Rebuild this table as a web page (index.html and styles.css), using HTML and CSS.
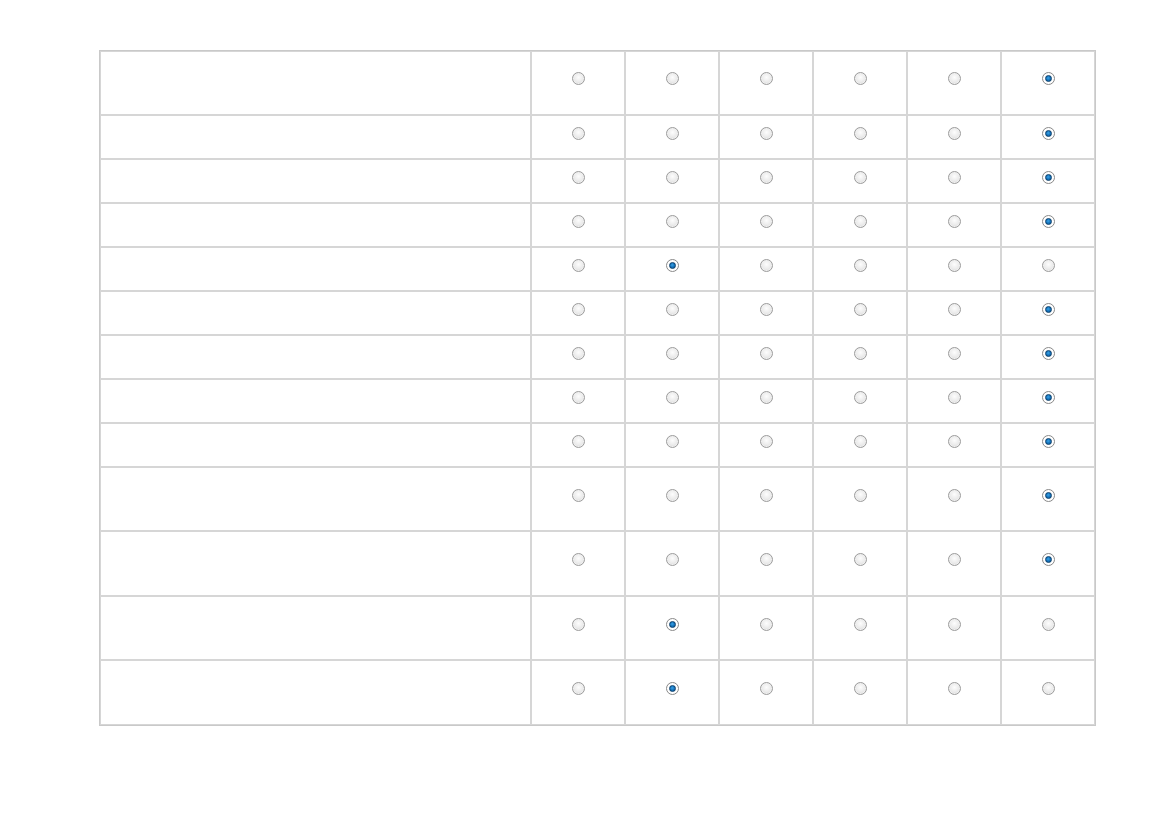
FILE: index.html
```html
<!DOCTYPE html>
<html lang="en">
<head>
<meta charset="utf-8">
<title>Survey matrix</title>
<link rel="stylesheet" href="styles.css">
</head>
<body>
<div class="wrap">
<table class="matrix">
<tbody>
<tr class="tall"><td class="q"><div class="cell"></div></td><td><div class="cell"><span class="radio"></span></div></td><td><div class="cell"><span class="radio"></span></div></td><td><div class="cell"><span class="radio"></span></div></td><td><div class="cell"><span class="radio"></span></div></td><td><div class="cell"><span class="radio"></span></div></td><td><div class="cell"><span class="radio on"></span></div></td></tr>
<tr><td class="q"><div class="cell"></div></td><td><div class="cell"><span class="radio"></span></div></td><td><div class="cell"><span class="radio"></span></div></td><td><div class="cell"><span class="radio"></span></div></td><td><div class="cell"><span class="radio"></span></div></td><td><div class="cell"><span class="radio"></span></div></td><td><div class="cell"><span class="radio on"></span></div></td></tr>
<tr><td class="q"><div class="cell"></div></td><td><div class="cell"><span class="radio"></span></div></td><td><div class="cell"><span class="radio"></span></div></td><td><div class="cell"><span class="radio"></span></div></td><td><div class="cell"><span class="radio"></span></div></td><td><div class="cell"><span class="radio"></span></div></td><td><div class="cell"><span class="radio on"></span></div></td></tr>
<tr><td class="q"><div class="cell"></div></td><td><div class="cell"><span class="radio"></span></div></td><td><div class="cell"><span class="radio"></span></div></td><td><div class="cell"><span class="radio"></span></div></td><td><div class="cell"><span class="radio"></span></div></td><td><div class="cell"><span class="radio"></span></div></td><td><div class="cell"><span class="radio on"></span></div></td></tr>
<tr><td class="q"><div class="cell"></div></td><td><div class="cell"><span class="radio"></span></div></td><td><div class="cell"><span class="radio on"></span></div></td><td><div class="cell"><span class="radio"></span></div></td><td><div class="cell"><span class="radio"></span></div></td><td><div class="cell"><span class="radio"></span></div></td><td><div class="cell"><span class="radio"></span></div></td></tr>
<tr><td class="q"><div class="cell"></div></td><td><div class="cell"><span class="radio"></span></div></td><td><div class="cell"><span class="radio"></span></div></td><td><div class="cell"><span class="radio"></span></div></td><td><div class="cell"><span class="radio"></span></div></td><td><div class="cell"><span class="radio"></span></div></td><td><div class="cell"><span class="radio on"></span></div></td></tr>
<tr><td class="q"><div class="cell"></div></td><td><div class="cell"><span class="radio"></span></div></td><td><div class="cell"><span class="radio"></span></div></td><td><div class="cell"><span class="radio"></span></div></td><td><div class="cell"><span class="radio"></span></div></td><td><div class="cell"><span class="radio"></span></div></td><td><div class="cell"><span class="radio on"></span></div></td></tr>
<tr><td class="q"><div class="cell"></div></td><td><div class="cell"><span class="radio"></span></div></td><td><div class="cell"><span class="radio"></span></div></td><td><div class="cell"><span class="radio"></span></div></td><td><div class="cell"><span class="radio"></span></div></td><td><div class="cell"><span class="radio"></span></div></td><td><div class="cell"><span class="radio on"></span></div></td></tr>
<tr><td class="q"><div class="cell"></div></td><td><div class="cell"><span class="radio"></span></div></td><td><div class="cell"><span class="radio"></span></div></td><td><div class="cell"><span class="radio"></span></div></td><td><div class="cell"><span class="radio"></span></div></td><td><div class="cell"><span class="radio"></span></div></td><td><div class="cell"><span class="radio on"></span></div></td></tr>
<tr class="tall"><td class="q"><div class="cell"></div></td><td><div class="cell"><span class="radio"></span></div></td><td><div class="cell"><span class="radio"></span></div></td><td><div class="cell"><span class="radio"></span></div></td><td><div class="cell"><span class="radio"></span></div></td><td><div class="cell"><span class="radio"></span></div></td><td><div class="cell"><span class="radio on"></span></div></td></tr>
<tr class="tall taller"><td class="q"><div class="cell"></div></td><td><div class="cell"><span class="radio"></span></div></td><td><div class="cell"><span class="radio"></span></div></td><td><div class="cell"><span class="radio"></span></div></td><td><div class="cell"><span class="radio"></span></div></td><td><div class="cell"><span class="radio"></span></div></td><td><div class="cell"><span class="radio on"></span></div></td></tr>
<tr class="tall"><td class="q"><div class="cell"></div></td><td><div class="cell"><span class="radio"></span></div></td><td><div class="cell"><span class="radio on"></span></div></td><td><div class="cell"><span class="radio"></span></div></td><td><div class="cell"><span class="radio"></span></div></td><td><div class="cell"><span class="radio"></span></div></td><td><div class="cell"><span class="radio"></span></div></td></tr>
<tr class="tall taller"><td class="q"><div class="cell"></div></td><td><div class="cell"><span class="radio"></span></div></td><td><div class="cell"><span class="radio on"></span></div></td><td><div class="cell"><span class="radio"></span></div></td><td><div class="cell"><span class="radio"></span></div></td><td><div class="cell"><span class="radio"></span></div></td><td><div class="cell"><span class="radio"></span></div></td></tr>
</tbody>
</table>
</div>
</body>
</html>
```

FILE: styles.css
```css
html, body {
  margin: 0;
  padding: 0;
  background: #ffffff;
  font-family: "Liberation Sans", Arial, sans-serif;
}

.wrap {
  padding: 50px 0 0 99px;
}

.matrix {
  border-collapse: separate;
  border-spacing: 0;
  border: 1px solid #c9c9c9;
  table-layout: fixed;
  width: 997px;
}

.matrix td {
  border: 1px solid #d6d6d6;
  padding: 0;
  width: 92px;
  vertical-align: middle;
}

.matrix td.q {
  width: 429px;
}

.cell {
  height: 42px;
  display: flex;
  align-items: center;
  justify-content: center;
  box-sizing: border-box;
  padding-bottom: 8px;
}

.tall .cell {
  height: 62px;
  padding-bottom: 7px;
}

.tall.taller .cell {
  height: 63px;
  padding-bottom: 8px;
}

.matrix tr:first-child .cell {
  padding-bottom: 9px;
}

.radio {
  position: relative;
  display: block;
  width: 13px;
  height: 13px;
  box-sizing: border-box;
  border-radius: 50%;
  border: 1px solid #9c9c9c;
  background: radial-gradient(circle at 50% 40%, #fdfdfd 0%, #ececec 50%, #d0d0d0 100%);
  box-shadow: inset 0 0 0 1px #f0f0f0;
}

.radio.on {
  border-color: #8a8a8a;
  background: radial-gradient(circle at 50% 50%, #ffffff 0%, #ffffff 65%, #d6d6d6 100%);
  box-shadow: none;
}

.radio.on::after {
  content: "";
  position: absolute;
  left: 2px;
  top: 2px;
  width: 7px;
  height: 7px;
  box-sizing: border-box;
  border-radius: 50%;
  border: 1px solid #0a3f6b;
  background: radial-gradient(circle at 45% 40%, #3aa3e6 0%, #1674bd 50%, #0d5490 100%);
}
```
